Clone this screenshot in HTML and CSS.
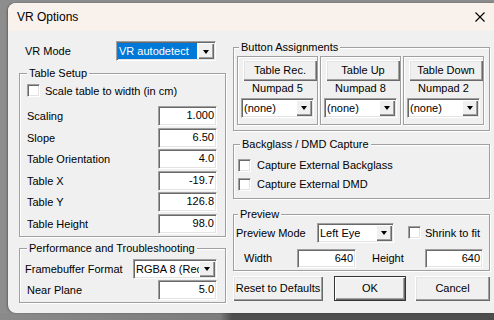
FILE: index.html
```html
<!DOCTYPE html>
<html lang="en">

<head>
  <meta charset="UTF-8">
  <title>VR Options</title>
  <link rel="stylesheet" href="styles.css">
</head>

<body>
  <div class="window">
    <div class="titlebar">
      <span class="title">VR Options</span>
      <svg class="close" width="10" height="10" viewBox="0 0 10 10">
        <path d="M0.5 0.5 L9.5 9.5 M9.5 0.5 L0.5 9.5" stroke="#000" stroke-width="1.1" fill="none"/>
      </svg>
    </div>

    <div class="client">
      <div class="col left">
        <div class="vrmode">
          <span class="vrlabel">VR Mode</span>
          <div class="combo vrcombo"><span class="value selected">VR autodetect</span><span class="drop"></span></div>
        </div>

        <fieldset class="group setup">
          <legend>Table Setup</legend>
          <div class="check first"><span class="box"></span>Scale table to width (in cm)</div>
          <div class="field top"><span>Scaling</span><span class="edit">1.000</span></div>
          <div class="field"><span>Slope</span><span class="edit">6.50</span></div>
          <div class="field"><span>Table Orientation</span><span class="edit">4.0</span></div>
          <div class="field"><span>Table X</span><span class="edit">-19.7</span></div>
          <div class="field"><span>Table Y</span><span class="edit">126.8</span></div>
          <div class="field"><span>Table Height</span><span class="edit">98.0</span></div>
        </fieldset>

        <fieldset class="group perf">
          <legend>Performance and Troubleshooting</legend>
          <div class="field fb"><span class="fblabel">Framebuffer Format</span>
            <div class="combo fbcombo"><span class="value">RGBA 8 (Rec</span><span class="drop"></span></div>
          </div>
          <div class="field"><span>Near Plane</span><span class="edit">5.0</span></div>
        </fieldset>
      </div>

      <div class="col right">
        <fieldset class="group assign">
          <legend>Button Assignments</legend>
          <div class="panels">
            <div class="panel">
              <div class="btn keybtn">Table Rec.</div>
              <div class="key">Numpad 5</div>
              <div class="combo keycombo"><span class="value">(none)</span><span class="drop"></span></div>
            </div>
            <div class="panel">
              <div class="btn keybtn">Table Up</div>
              <div class="key">Numpad 8</div>
              <div class="combo keycombo"><span class="value">(none)</span><span class="drop"></span></div>
            </div>
            <div class="panel">
              <div class="btn keybtn">Table Down</div>
              <div class="key">Numpad 2</div>
              <div class="combo keycombo"><span class="value">(none)</span><span class="drop"></span></div>
            </div>
          </div>
        </fieldset>

        <fieldset class="group capture">
          <legend>Backglass / DMD Capture</legend>
          <div class="check first"><span class="box"></span>Capture External Backglass</div>
          <div class="check second"><span class="box"></span>Capture External DMD</div>
        </fieldset>

        <fieldset class="group preview">
          <legend>Preview</legend>
          <div class="prow">
            <span class="pmlabel">Preview Mode</span>
            <div class="combo pmcombo"><span class="value">Left Eye</span><span class="drop"></span></div>
            <div class="check shrink"><span class="box"></span>Shrink to fit</div>
          </div>
          <div class="prow sizes">
            <span class="wlabel">Width</span>
            <span class="edit wedit">640</span>
            <span class="hlabel">Height</span>
            <span class="edit hedit">640</span>
          </div>
        </fieldset>

        <div class="actions">
          <div class="btn reset">Reset to Defaults</div>
          <div class="btn ok">OK</div>
          <div class="btn cancel">Cancel</div>
        </div>
      </div>
    </div>
  </div>
</body>

</html>
```

FILE: styles.css
```css
body {
  margin: 0;
  height: 320px;
  overflow: hidden;
  background: linear-gradient(to right, #8a8a8a 0, #7c7c7c 220px, #4e4e4e 232px) left bottom / 100% 7px no-repeat, #8d8d8d;
  font-family: "Liberation Sans", Arial, sans-serif;
  font-size: 11px;
  color: #000;
}

.window {
  margin: 3px 0 0 8px;
  height: 310px;
  background: #f0f0f0;
  border-radius: 8px 0 0 8px;
  box-shadow: -1px 0 2px rgba(0, 0, 0, .3);
  overflow: hidden;
}

.titlebar {
  height: 28px;
  background: #f9f1ec;
  display: flex;
  align-items: center;
  justify-content: space-between;
  padding: 0 9px;
  font-size: 12px;
}

.client {
  display: flex;
  gap: 7px;
  padding: 10px 0 0 11px;
}

.left {
  width: 207px;
}

.right {
  width: 257px;
}

/* group boxes */
.group {
  margin: 0;
  border: 1px solid #a0a0a0;
  box-shadow: inset 1px 1px #fff, 1px 1px #fff;
  min-width: 0;
}

.group legend {
  padding: 0 2px;
  line-height: 13px;
  background: #f0f0f0;
}

/* common controls */
.edit {
  box-sizing: border-box;
  display: block;
  width: 59px;
  height: 20px;
  line-height: 17px;
  background: #fff;
  border: 1px solid;
  border-color: #a0a0a0 #fff #fff #a0a0a0;
  box-shadow: inset 1px 1px #696969, inset -1px -1px #e3e3e3;
  text-align: right;
  padding-right: 2px;
}

.combo {
  box-sizing: border-box;
  display: flex;
  height: 20px;
  background: #fff;
  border: 1px solid;
  border-color: #a0a0a0 #fff #fff #a0a0a0;
  box-shadow: inset 1px 1px #696969, inset -1px -1px #e3e3e3;
  padding: 1px;
}

.combo .value {
  flex: 1;
  line-height: 16px;
  padding-left: 1px;
  white-space: nowrap;
  overflow: hidden;
}

.combo .selected {
  background: #0078d7;
  color: #fff;
  margin-right: 1px;
}

.drop {
  width: 16px;
  background: #f0f0f0;
  box-shadow: inset 1px 1px #fff, inset -1px -1px #696969, inset -2px -2px #a0a0a0;
  display: flex;
  align-items: center;
  justify-content: center;
}

.drop::after {
  content: "";
  border-left: 3.5px solid transparent;
  border-right: 3.5px solid transparent;
  border-top: 4px solid #000;
  margin: 1px 1px 0 0;
}

.btn {
  box-sizing: border-box;
  background: #f0f0f0;
  box-shadow: inset 1px 1px #fff, inset -1px -1px #696969, inset -2px -2px #a0a0a0, inset 2px 2px #e3e3e3;
  display: flex;
  align-items: center;
  justify-content: center;
}

.check {
  display: flex;
  align-items: center;
  height: 13px;
  gap: 5px;
}

.box {
  box-sizing: border-box;
  width: 13px;
  height: 13px;
  background: #fff;
  border: 1px solid;
  border-color: #a0a0a0 #fff #fff #a0a0a0;
  box-shadow: inset 1px 1px #696969, inset -1px -1px #e3e3e3;
}

.field {
  display: flex;
  justify-content: space-between;
  align-items: center;
  height: 20px;
  margin-top: 1.5px;
}

/* left column */
.vrmode {
  display: flex;
  align-items: center;
  height: 20px;
}

.vrlabel {
  width: 91px;
  margin-left: 6px;
}

.vrcombo {
  width: 100px;
}

.setup {
  margin-top: 6px;
  padding: 0 8px 2px 7px;
}

.setup .check.first {
  margin-top: 4px;
}

.setup .field.top {
  margin-top: 9px;
}

.perf {
  margin-top: 5.5px;
  padding: 0 8px 2px 7px;
}

.perf .fb {
  margin-top: 3.5px;
}

.perf .field + .field {
  margin-top: 1px;
}

.fblabel {
  margin-left: -2px;
}

.fbcombo {
  width: 84px;
}

/* right column */
.assign {
  padding: 0 5px 5px 3px;
}

.assign legend,
.capture legend,
.preview legend {
  margin-left: 2px;
}

.panels {
  display: flex;
  gap: 2px;
  margin-top: 1.5px;
}

.panel {
  box-sizing: border-box;
  width: 81px;
  height: 69px;
  border: 1px solid #a0a0a0;
  box-shadow: inset 1px 1px #fff, 1px 1px #fff;
}

.keybtn {
  width: 74px;
  height: 21px;
  margin: 3px 0 0 5px;
}

.key {
  text-align: center;
  line-height: 13px;
  margin-top: 1px;
}

.keycombo {
  width: 73px;
  margin: 3px 0 0 3px;
}

.capture {
  margin-top: 7px;
  padding: 0 5px 7px 4px;
}

.capture .check {
  gap: 6px;
}

.capture .check.first {
  margin-top: 8px;
}

.capture .check.second {
  margin-top: 6px;
}

.preview {
  margin-top: 9.5px;
  padding: 0 5px 2px 2px;
}

.prow {
  display: flex;
  align-items: center;
  height: 20px;
  margin-top: 1.5px;
}

.prow.sizes {
  height: 19px;
  margin-top: 6px;
}

.pmlabel {
  width: 81px;
}

.pmcombo {
  width: 77px;
}

.shrink {
  margin-left: 14px;
  gap: 4px;
}

.wlabel {
  margin-left: 8px;
  width: 53px;
}

.sizes .edit {
  height: 19px;
  line-height: 16px;
}

.hlabel {
  margin-left: 16px;
  width: 53px;
}

.hedit {
  width: 58px;
}

.actions {
  display: flex;
  margin-top: 5px;
}

.actions .btn {
  height: 25px;
}

.reset {
  width: 90px;
}

.ok {
  width: 72px;
  margin-left: 11px;
  box-shadow: inset 0 0 0 1px #333, inset 2px 2px #fff, inset -2px -2px #696969, inset -3px -3px #a0a0a0;
}

.cancel {
  width: 75px;
  margin-left: 9px;
}
```
